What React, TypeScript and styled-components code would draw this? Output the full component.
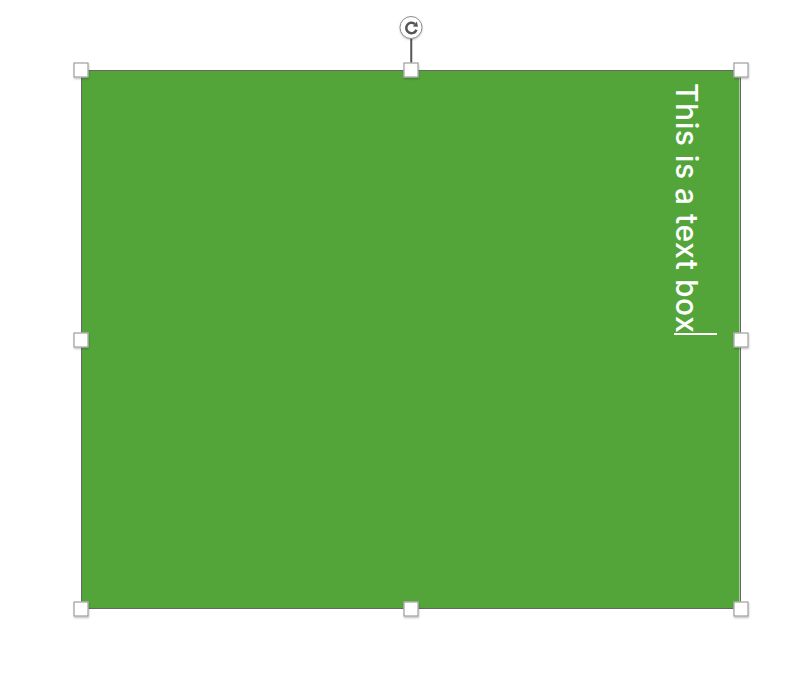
import React from 'react';
import styled, { createGlobalStyle } from 'styled-components';

const GlobalStyle = createGlobalStyle`
  html, body {
    margin: 0;
    padding: 0;
    background: #ffffff;
  }
  body {
    font-family: Inter, Roboto, "Liberation Sans", sans-serif;
  }
`;

const Canvas = styled.div`
  position: relative;
  width: 809px;
  height: 699px;
  overflow: hidden;
  background: #ffffff;
`;

const Selection = styled.div`
  position: absolute;
  left: 81px;
  top: 70px;
  width: 660px;
  height: 539px;
`;

const Shape = styled.div`
  box-sizing: border-box;
  width: 100%;
  height: 100%;
  background: #53a53a;
  border: 1.5px solid #666666;
  box-shadow: inset -1px 0 0 rgba(255, 255, 255, 0.45);
  display: flex;
  justify-content: flex-end;
  padding: 12px 23px 0 0;
`;

const TextBody = styled.div`
  writing-mode: vertical-rl;
  color: #ffffff;
  font-family: Inter, Roboto, "Liberation Sans", sans-serif;
  font-size: 30px;
  font-weight: 500;
  letter-spacing: 0.5px;
  line-height: 43px;
  white-space: nowrap;
`;

const Caret = styled.span`
  display: inline-block;
  width: 43px;
  height: 1.5px;
  background: #ffffff;
  vertical-align: middle;
`;

const Handle = styled.div<{ $x: number; $y: number }>`
  position: absolute;
  left: ${(p) => p.$x}%;
  top: ${(p) => p.$y}%;
  width: 15px;
  height: 15px;
  box-sizing: border-box;
  transform: translate(-50%, -50%);
  background: #ffffff;
  border: 1px solid #8c8c8c;
  box-shadow: 0 1px 2px rgba(0, 0, 0, 0.25);
`;

const RotateStalk = styled.div`
  position: absolute;
  left: 50%;
  top: -31px;
  width: 1.5px;
  height: 31px;
  transform: translateX(-50%);
  background: #555555;
`;

const RotateKnob = styled.div`
  position: absolute;
  left: 50%;
  top: -54px;
  width: 23px;
  height: 23px;
  box-sizing: border-box;
  transform: translateX(-50%);
  border-radius: 50%;
  background: #ffffff;
  border: 1.5px solid #8c8c8c;
  box-shadow: 0 1px 2px rgba(0, 0, 0, 0.2);
  display: flex;
  align-items: center;
  justify-content: center;
`;

const RotateIcon = () => (
  <svg width="18" height="18" viewBox="0 0 24 24">
    <path
      d="M16.5 6.64 A7 7 0 1 0 18.58 14.39"
      fill="none"
      stroke="#555555"
      strokeWidth="3.4"
      strokeLinecap="butt"
    />
    <polygon points="19.2,3.4 13.8,9.9 20.6,10.2" fill="#555555" />
  </svg>
);

const handles: [number, number][] = [
  [0, 0],
  [50, 0],
  [100, 0],
  [0, 50],
  [100, 50],
  [0, 100],
  [50, 100],
  [100, 100],
];

export default function App() {
  return (
    <>
      <GlobalStyle />
      <Canvas>
        <Selection>
          <Shape>
            <TextBody>
              This is a text box
              <Caret />
            </TextBody>
          </Shape>
          <RotateStalk />
          <RotateKnob>
            <RotateIcon />
          </RotateKnob>
          {handles.map(([x, y]) => (
            <Handle key={`${x}-${y}`} $x={x} $y={y} />
          ))}
        </Selection>
      </Canvas>
    </>
  );
}
